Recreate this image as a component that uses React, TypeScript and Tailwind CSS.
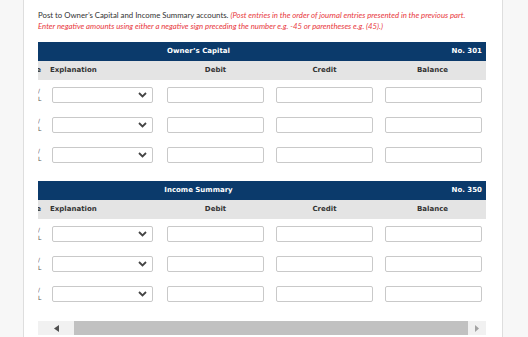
import React from "react";

const hdr = { fontFamily: '"DejaVu Sans", Verdana, sans-serif' };

function Chevron() {
  return (
    <svg width="9" height="6" viewBox="0 0 9 6" className="shrink-0">
      <path d="M1 1 L4.5 4.5 L8 1" fill="none" stroke="#444" strokeWidth="1.8" />
    </svg>
  );
}

function Row() {
  return (
    <div className="flex h-[30px] items-center">
      <div className="w-[8px] overflow-hidden">
        <div className="flex flex-col items-start text-[6px] leading-[8px] text-[#555] pl-[0px]" style={hdr}>
          <span>/</span>
          <span>L</span>
        </div>
      </div>
      <div className="w-[115px] pl-[6px]">
        <div className="w-[101px] h-[16px] border border-[#c9c9c9] rounded-[2px] bg-white flex items-center justify-end pr-[5px]">
          <Chevron />
        </div>
      </div>
      <div className="w-[109px] pl-[6px]">
        <div className="w-[97px] h-[16px] border border-[#c9c9c9] rounded-[2px] bg-white" />
      </div>
      <div className="w-[109px] pl-[6px]">
        <div className="w-[97px] h-[16px] border border-[#c9c9c9] rounded-[2px] bg-white" />
      </div>
      <div className="w-[107px] pl-[6px]">
        <div className="w-[97px] h-[16px] border border-[#c9c9c9] rounded-[2px] bg-white" />
      </div>
    </div>
  );
}

function Ledger({ title, no }: { title: string; no: string }) {
  return (
    <div className="w-[448px]">
      <div className="h-[19px] bg-[#0b3a6b] flex items-center text-white text-[7px] font-bold" style={hdr}>
        <div className="w-[321px] text-center">{title}</div>
        <div className="flex-1 text-right pr-[4px]">{no}</div>
      </div>
      <div className="h-[19px] bg-[#e4e4e4] flex items-center text-[7px] font-bold text-[#333]" style={hdr}>
        <div className="w-[8px] overflow-hidden flex justify-end">
          <span className="whitespace-nowrap pr-[5px]">Date</span>
        </div>
        <div className="w-[115px] pl-[4px]">Explanation</div>
        <div className="w-[109px] text-center">Debit</div>
        <div className="w-[109px] text-center">Credit</div>
        <div className="w-[107px] text-center">Balance</div>
      </div>
      <Row />
      <Row />
      <Row />
    </div>
  );
}

export default function App() {
  return (
    <div className="w-[528px] h-[337px] bg-[#f7f7f7] overflow-hidden flex">
      <div className="ml-[23px] w-[480px] h-full bg-white border-x border-[#dedede] pl-[14px] pr-[16px] pt-[10px]">
        <p className="text-[7.8px] leading-[11px] text-[#333] whitespace-nowrap" style={{ fontFamily: 'Lato, "Open Sans", sans-serif' }}>
          Post to Owner’s Capital and Income Summary accounts.{" "}
          <span className="italic text-[#e8383d]">
            (Post entries in the order of journal entries presented in the previous part.
            <br />
            Enter negative amounts using either a negative sign preceding the number e.g. -45 or parentheses e.g. (45).)
          </span>
        </p>
        <div className="mt-[10px]">
          <Ledger title="Owner’s Capital" no="No. 301" />
        </div>
        <div className="mt-[11px]">
          <Ledger title="Income Summary" no="No. 350" />
        </div>
        <div className="mt-[12px] w-[448px] h-[14px] bg-[#f1f1f1] flex items-center">
          <div className="w-[36px] flex justify-center">
            <svg width="5" height="7" viewBox="0 0 5 7"><path d="M5 0 L0 3.5 L5 7 Z" fill="#505050" /></svg>
          </div>
          <div className="w-[394px] h-full bg-[#c1c1c1]" />
          <div className="flex-1 flex justify-center">
            <svg width="4" height="7" viewBox="0 0 4 7"><path d="M0 0 L4 3.5 L0 7 Z" fill="#a3a3a3" /></svg>
          </div>
        </div>
      </div>
    </div>
  );
}
